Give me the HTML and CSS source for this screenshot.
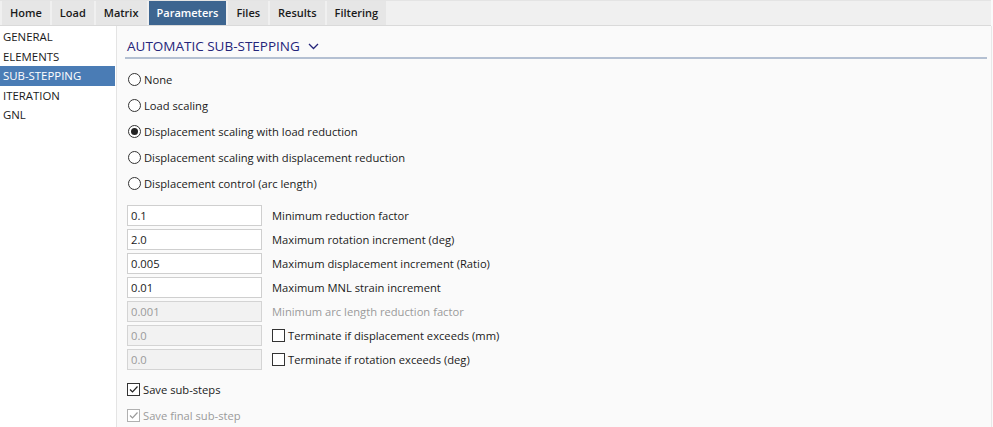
FILE: index.html
```html
<!DOCTYPE html>
<html>
<head>
<meta charset="utf-8">
<link rel="stylesheet" href="styles.css">
</head>
<body>
<div class="app">
  <div class="tabbar">
    <div class="tab">Home</div>
    <div class="tab">Load</div>
    <div class="tab">Matrix</div>
    <div class="tab active">Parameters</div>
    <div class="tab">Files</div>
    <div class="tab">Results</div>
    <div class="tab">Filtering</div>
  </div>
  <div class="body">
    <div class="sidebar">
      <div class="nav">GENERAL</div>
      <div class="nav">ELEMENTS</div>
      <div class="nav selected">SUB-STEPPING</div>
      <div class="nav">ITERATION</div>
      <div class="nav">GNL</div>
    </div>
    <div class="main">
      <div class="section-head">
        <span class="section-title">AUTOMATIC SUB-STEPPING</span>
        <svg class="chev" width="11" height="7" viewBox="0 0 11 7"><path d="M1 1 L5.5 5.5 L10 1" fill="none" stroke="#25257a" stroke-width="1.3"/></svg>
      </div>
      <div class="radios">
        <label class="radio"><span class="rb"></span>None</label>
        <label class="radio"><span class="rb"></span>Load scaling</label>
        <label class="radio"><span class="rb on"></span>Displacement scaling with load reduction</label>
        <label class="radio"><span class="rb"></span>Displacement scaling with displacement reduction</label>
        <label class="radio"><span class="rb"></span>Displacement control (arc length)</label>
      </div>
      <div class="fields">
        <div class="field"><div class="input">0.1</div><span class="flabel">Minimum reduction factor</span></div>
        <div class="field"><div class="input">2.0</div><span class="flabel">Maximum rotation increment (deg)</span></div>
        <div class="field"><div class="input">0.005</div><span class="flabel">Maximum displacement increment (Ratio)</span></div>
        <div class="field"><div class="input">0.01</div><span class="flabel">Maximum MNL strain increment</span></div>
        <div class="field disabled"><div class="input">0.001</div><span class="flabel">Minimum arc length reduction factor</span></div>
        <div class="field"><div class="input dis">0.0</div><span class="flabel"><span class="cb"></span>Terminate if displacement exceeds (mm)</span></div>
        <div class="field"><div class="input dis">0.0</div><span class="flabel"><span class="cb"></span>Terminate if rotation exceeds (deg)</span></div>
      </div>
      <div class="checks">
        <label class="check"><span class="cb checked"><svg width="11" height="11" viewBox="0 0 11 11"><path d="M2 5.5 L4.5 8 L9.5 2.5" fill="none" stroke="#222" stroke-width="1.2"/></svg></span>Save sub-steps</label>
        <label class="check grey"><span class="cb checked"><svg width="11" height="11" viewBox="0 0 11 11"><path d="M2 5.5 L4.5 8 L9.5 2.5" fill="none" stroke="#9a9a9a" stroke-width="1.2"/></svg></span>Save final sub-step</label>
      </div>
    </div>
  </div>
</div>
</body>
</html>
```
FILE: styles.css
```css
* { box-sizing: border-box; }
html, body { margin: 0; padding: 0; }
body {
  width: 993px;
  height: 427px;
  overflow: hidden;
  font-family: "Open Sans", "Noto Sans", sans-serif;
  font-size: 11.2px;
  color: #1a1a1a;
  background: #fafafa;
}
.app { display: flex; flex-direction: column; height: 427px; }
.tabbar {
  display: flex;
  height: 26px;
  background: #f0f0f0;
  border-top: 1px solid #e4e4e4;
  border-bottom: 1px solid #dadada;
  padding-left: 2px;
  gap: 2px;
  margin-right: 2px;
}
.tab {
  background: #e6e6e6;
  padding: 0 8px;
  font-weight: 600;
  font-size: 11px;
  line-height: 24px;
  color: #1a1a1a;
}
.tab.active { background: #3d6590; color: #fff; }
.body { display: flex; flex: 1; }
.sidebar {
  width: 117px;
  background: #ffffff;
  border-right: 1px solid #e4e4e4;
  padding-top: 1px;
}
.nav {
  height: 19.5px;
  line-height: 19.5px;
  padding-left: 3px;
  font-size: 11.4px;
  color: #1a1a1a;
}
.nav.selected { background: #4a7cb5; color: #fff; margin-right: 1px; }
.main {
  flex: 1;
  padding: 0 4px 0 8px;
  border-right: 1px solid #e8e8e8;
  margin-right: 1px;
}
.section-head {
  display: flex;
  align-items: center;
  gap: 8px;
  height: 33px;
  padding: 8px 0 0 2px;
  border-bottom: 2px solid #b4c0d2;
}
.section-title { color: #25257a; font-size: 13.5px; letter-spacing: 0; }
.chev { margin-top: 2px; }
.radios { display: flex; flex-direction: column; padding-top: 7px; }
.radio {
  display: flex;
  align-items: center;
  height: 26px;
  gap: 3px;
  padding-left: 3px;
}
.rb {
  width: 13px; height: 13px;
  border: 1px solid #333;
  border-radius: 50%;
  background: #fff;
  position: relative;
}
.rb.on::after {
  content: "";
  position: absolute;
  left: 2px; top: 2px;
  width: 7px; height: 7px;
  border-radius: 50%;
  background: #222;
}
.fields { display: flex; flex-direction: column; gap: 3px; padding-top: 9px; padding-left: 2px; }
.field { display: flex; align-items: center; height: 21px; }
.input {
  width: 135px; height: 21px;
  border: 1px solid #cfcfcf;
  background: #fff;
  padding-left: 3px;
  line-height: 19px;
  margin-right: 10px;
}
.input.dis, .disabled .input { background: #f2f2f2; color: #9a9a9a; border-color: #d4d4d4; }
.disabled .flabel { color: #9a9a9a; }
.flabel { display: flex; align-items: center; gap: 3px; }
.cb {
  width: 13px; height: 13px;
  border: 1px solid #333;
  background: #fff;
  display: inline-flex;
  align-items: center;
  justify-content: center;
}
.checks { display: flex; flex-direction: column; padding-top: 6px; padding-left: 2px; }
.check { display: flex; align-items: center; gap: 3px; height: 26px; }
.check.grey { color: #9a9a9a; }
.check.grey .cb { border-color: #b0b0b0; }
```
